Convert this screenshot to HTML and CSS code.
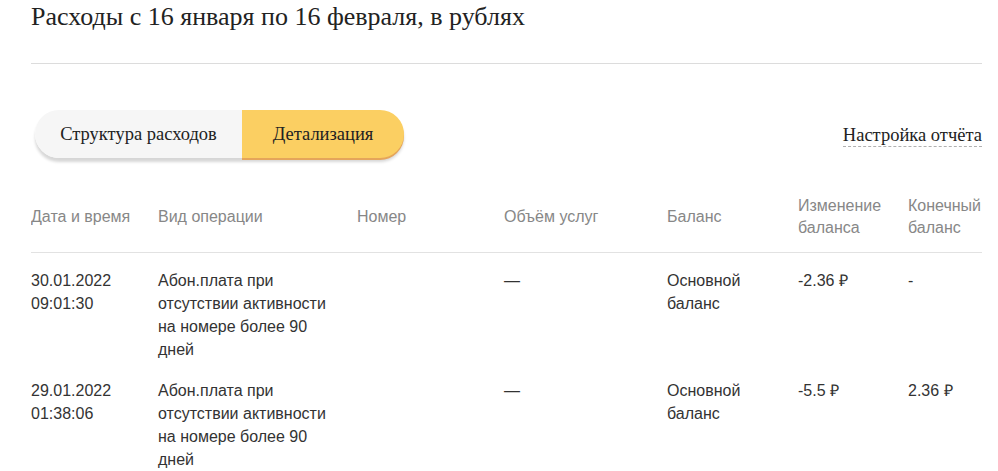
FILE: index.html
```html
<!DOCTYPE html>
<html lang="ru">
<head>
<meta charset="utf-8">
<link rel="stylesheet" href="styles.css">
</head>
<body>
<div class="page">
  <h1 class="title">Расходы с 16 января по 16 февраля, в рублях</h1>
  <div class="divider"></div>
  <div class="controls">
    <div class="toggle">
      <div class="tab tab-off">Структура расходов</div>
      <div class="tab tab-on">Детализация</div>
    </div>
    <span class="settings">Настройка отчёта</span>
  </div>
  <div class="table-wrap">
    <table class="details">
      <colgroup>
        <col class="c1"><col class="c2"><col class="c3"><col class="c4"><col class="c5"><col class="c6"><col class="c7">
      </colgroup>
      <thead>
        <tr>
          <th>Дата и время</th>
          <th>Вид операции</th>
          <th>Номер</th>
          <th>Объём услуг</th>
          <th>Баланс</th>
          <th>Изменение баланса</th>
          <th>Конечный баланс</th>
        </tr>
      </thead>
      <tbody>
        <tr>
          <td>30.01.2022 09:01:30</td>
          <td>Абон.плата при отсутствии активности на номере более 90 дней</td>
          <td></td>
          <td>—</td>
          <td>Основной баланс</td>
          <td>-2.36 ₽</td>
          <td>-</td>
        </tr>
        <tr>
          <td>29.01.2022 01:38:06</td>
          <td>Абон.плата при отсутствии активности на номере более 90 дней</td>
          <td></td>
          <td>—</td>
          <td>Основной баланс</td>
          <td>-5.5 ₽</td>
          <td>2.36 ₽</td>
        </tr>
      </tbody>
    </table>
  </div>
</div>
</body>
</html>
```

FILE: styles.css
```css
html, body {
  margin: 0;
  padding: 0;
  background: #fff;
}

.page {
  width: 951px;
  margin-left: 31px;
}

.title {
  margin: 0;
  padding-top: 1px;
  font-family: "Liberation Serif", serif;
  font-weight: normal;
  font-size: 26px;
  line-height: 31px;
  color: #222;
}

.divider {
  margin-top: 31px;
  height: 1px;
  background: #dcdcdc;
}

.controls {
  display: flex;
  align-items: center;
  justify-content: space-between;
  margin-top: 46px;
  padding-left: 4px;
}

.toggle {
  display: flex;
  border-radius: 24px;
  box-shadow: 0 4px 3px rgba(0, 0, 0, 0.16);
}

.tab {
  height: 48px;
  display: flex;
  align-items: center;
  font-family: "Liberation Serif", serif;
  font-size: 18.5px;
  color: #222;
}

.tab-off {
  width: 207px;
  justify-content: center;
  background: #f6f6f6;
  border-radius: 24px 0 0 24px;
}

.tab-on {
  width: 162px;
  justify-content: center;
  background: #fbcf62;
  border-radius: 0 24px 24px 0;
  box-shadow: 0 2px 0 #e5a55a;
}

.settings {
  font-family: "Liberation Serif", serif;
  font-size: 18.5px;
  color: #222;
  line-height: 21px;
  border-bottom: 1px dashed #b0b0b0;
  margin-top: 3px;
}

.table-wrap {
  margin-top: 24px;
  overflow: hidden;
}

.details {
  width: 1010px;
  table-layout: fixed;
  border-collapse: collapse;
  font-family: "Liberation Sans", Arial, sans-serif;
  font-size: 16px;
  line-height: 23px;
}

.c1 { width: 127px; }
.c2 { width: 199px; }
.c3 { width: 147px; }
.c4 { width: 163px; }
.c5 { width: 131px; }
.c6 { width: 110px; }
.c7 { width: 133px; }

.details th {
  text-align: left;
  font-weight: normal;
  color: #878787;
  padding: 13px 20px 13px 0;
  line-height: 22px;
  vertical-align: middle;
  height: 44px;
  border-bottom: 1px solid #e2e2e2;
}

.details td {
  text-align: left;
  vertical-align: top;
  color: #333;
  padding: 16px 20px 2px 0;
}
```
